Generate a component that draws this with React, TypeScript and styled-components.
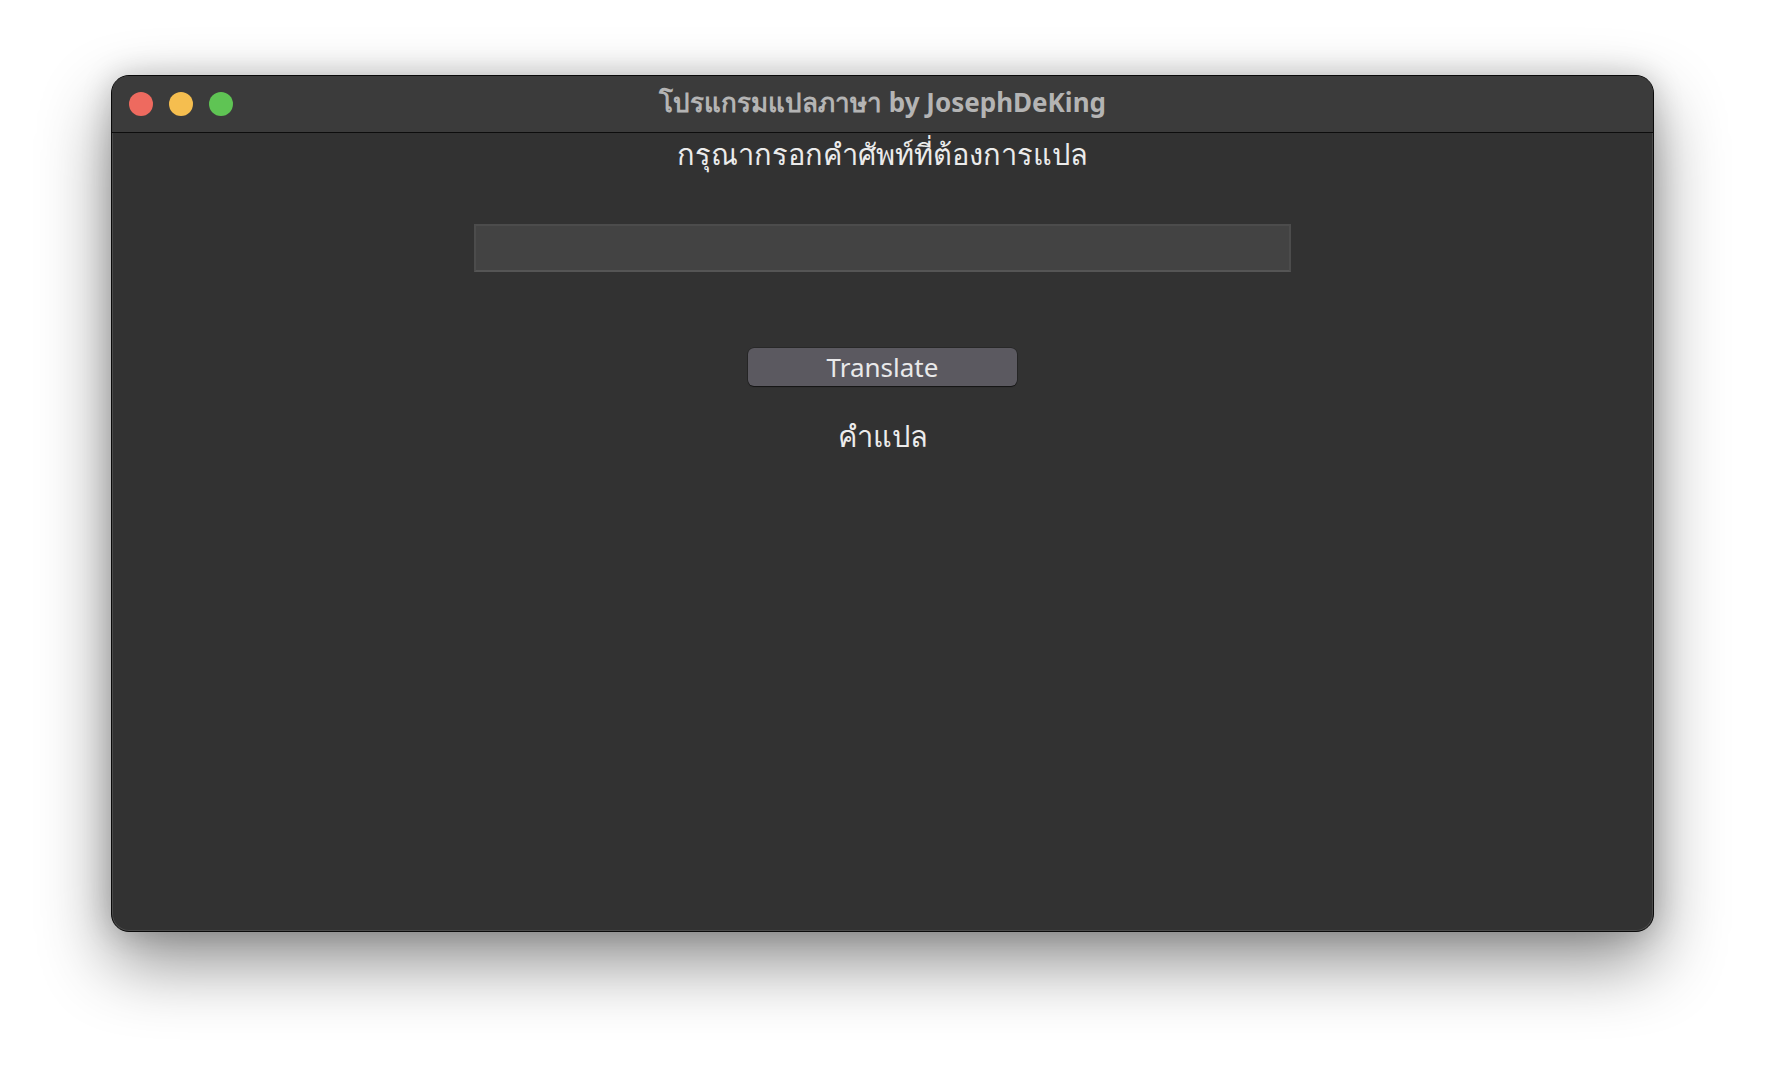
import styled, { createGlobalStyle } from "styled-components";

const GlobalStyle = createGlobalStyle`
    html, body {
        margin: 0;
        padding: 0;
        background: #ffffff;
    }
    body {
        font-family: "Noto Sans", "Liberation Sans", sans-serif;
    }
`

const lights = ["#ee6a5f", "#f5be4f", "#5fc454"];

export default function App() {
    return (
        <>
            <GlobalStyle/>
            <Page>
                <Window>
                    <TitleBar>
                        <Lights>
                            {lights.map(c => <Light key={c} color={c}/>)}
                        </Lights>
                        <Title>โปรแกรมแปลภาษา by JosephDeKing</Title>
                    </TitleBar>
                    <Content>
                        <Heading>กรุณากรอกคำศัพท์ที่ต้องการแปล</Heading>
                        <WordInput type="text"/>
                        <TranslateButton>Translate</TranslateButton>
                        <Result>คำแปล</Result>
                    </Content>
                </Window>
            </Page>
        </>
    );
}

const Page = styled.div`
    width: 1766px;
    height: 1080px;
    box-sizing: border-box;
    padding: 75px 0 0 111px;
    background: #ffffff;
`

const Window = styled.div`
    width: 1543px;
    height: 857px;
    box-sizing: border-box;
    display: flex;
    flex-direction: column;
    border-radius: 18px;
    border: 1px solid #0a0a0a;
    background: #323232;
    overflow: hidden;
    box-shadow: 0 0 0 1px rgba(255, 255, 255, 0.12) inset,
    0 30px 70px rgba(0, 0, 0, 0.45),
    0 0 30px rgba(0, 0, 0, 0.18);
`

const TitleBar = styled.div`
    position: relative;
    height: 56px;
    flex-shrink: 0;
    display: flex;
    align-items: center;
    justify-content: center;
    background: #3b3b3b;
    border-bottom: 1px solid #0d0d0d;
`

const Lights = styled.div`
    position: absolute;
    left: 17px;
    top: 16px;
    display: flex;
    gap: 16px;
`

const Light = styled.span<{ color: string }>`
    width: 24px;
    height: 24px;
    border-radius: 50%;
    background: ${p => p.color};
`

const Title = styled.div`
    font-size: 26px;
    line-height: 32px;
    font-weight: 700;
    color: #b4b4b4;
    margin-top: -4px;
`

const Content = styled.div`
    flex: 1;
    display: flex;
    flex-direction: column;
    align-items: center;
`

const Heading = styled.div`
    margin-top: 2px;
    font-size: 29px;
    line-height: 38px;
    font-weight: 500;
    color: #ebebeb;
`

const WordInput = styled.input`
    margin-top: 51px;
    width: 817px;
    height: 48px;
    box-sizing: border-box;
    background: #434343;
    border: 2px solid #4c4c4c;
    border-bottom-color: #555555;
    outline: none;
    color: #eeeeee;
    font-size: 20px;
`

const TranslateButton = styled.button`
    margin-top: 76px;
    width: 269px;
    height: 38px;
    border: none;
    border-radius: 6px;
    background: #5b5960;
    box-shadow: 0 1px 1px rgba(0, 0, 0, 0.5), 0 0 0 0.5px rgba(0, 0, 0, 0.4);
    color: #e9e9ea;
    font-family: "Noto Sans", "Liberation Sans", sans-serif;
    font-size: 26px;
    line-height: 38px;
    padding: 0;
`

const Result = styled.div`
    margin-top: 31px;
    font-size: 29px;
    line-height: 38px;
    font-weight: 500;
    color: #ececec;
`
